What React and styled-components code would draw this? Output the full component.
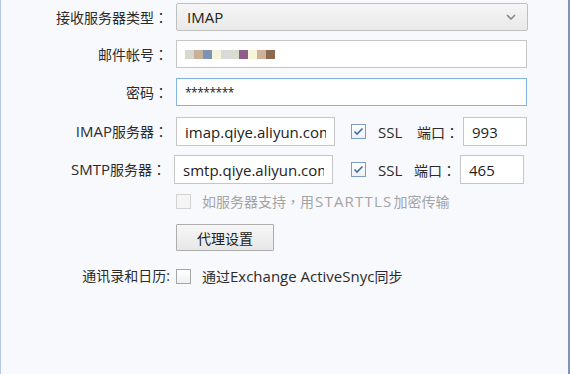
import React from "react";

// Styling
import styled, { createGlobalStyle } from "styled-components";

const mosaic = [
  "#d6d8cf",
  "#c9b09b",
  "#7d93b5",
  "#f4f4dc",
  "#d9d9d7",
  "#dbdcd0",
  "#8f5c8c",
  "#f6f5d8",
  "#cdb19a",
  "#8b6a52",
];

const servers = [
  { name: "IMAP", host: "imap.qiye.aliyun.com", port: "993", shift: 0 },
  { name: "SMTP", host: "smtp.qiye.aliyun.com", port: "465", shift: 2 },
];

const App = () => {
  return (
    <>
      <GlobalStyle />
      <StlWindow>
        <StlRow>
          <StlLabel>
            接收服务器类型<StlColon>：</StlColon>
          </StlLabel>
          <StlSelect>
            <StlLatin>IMAP</StlLatin>
            <svg width="10" height="6" viewBox="0 0 10 6">
              <polyline
                points="1,1 5,5 9,1"
                fill="none"
                stroke="#8a8a8a"
                strokeWidth="1.6"
              />
            </svg>
          </StlSelect>
        </StlRow>

        <StlRow $gap={9}>
          <StlLabel>
            邮件帐号<StlColon>：</StlColon>
          </StlLabel>
          <StlInput as="div">
            <StlMosaic>
              {mosaic.map((color, i) => (
                <StlTile key={i} style={{ background: color }} />
              ))}
            </StlMosaic>
          </StlInput>
        </StlRow>

        <StlRow $gap={10}>
          <StlLabel>
            密码<StlColon>：</StlColon>
          </StlLabel>
          <StlInput defaultValue="********" $focused $small />
        </StlRow>

        {servers.map((server, i) => (
          <StlRow $gap={i === 0 ? 11 : 9} key={server.name}>
            <StlLabel $shift={server.shift}>
              <StlLatin>{server.name}</StlLatin>服务器<StlColon>：</StlColon>
            </StlLabel>
            <StlInput $width={159} $tall defaultValue={server.host} />
            <StlCheck $checked $shift={server.shift}>
              <svg width="11" height="9" viewBox="0 0 11 9">
                <polyline
                  points="1.5,4.5 4,7 9.5,1.5"
                  fill="none"
                  stroke="#3d6fae"
                  strokeWidth="1.6"
                />
              </svg>
            </StlCheck>
            <StlSsl>SSL</StlSsl>
            <StlPortLabel $shift={server.shift}>
              端口<StlColon>：</StlColon>
            </StlPortLabel>
            <StlInput $width={64} $tall defaultValue={server.port} />
          </StlRow>
        ))}

        <StlRow $gap={9} $short>
          <StlLabel />
          <StlCheck $disabled />
          <StlOption $disabled>
            如服务器支持<StlColon>，</StlColon>用
            <StlLatin $wide>STARTTLS</StlLatin>加密传输
          </StlOption>
        </StlRow>

        <StlRow $gap={15}>
          <StlLabel />
          <StlButton>代理设置</StlButton>
        </StlRow>

        <StlRow $gap={17} $short>
          <StlLabel $plain>通讯录和日历:</StlLabel>
          <StlCheck />
          <StlOption>
            通过<StlLatin>Exchange ActiveSnyc</StlLatin>同步
          </StlOption>
        </StlRow>
      </StlWindow>
    </>
  );
};

const GlobalStyle = createGlobalStyle`
  body {
    margin: 0;
    font-family: "Open Sans", "Noto Sans CJK SC", sans-serif;
    font-size: 14px;
    color: #2b2b2b;
  }
`;

const StlWindow = styled.div`
  box-sizing: border-box;
  width: 570px;
  height: 374px;
  padding-top: 3px;
  background: #f7f9fd;
  border-left: 1px solid #b9c8de;
  border-right: 2px solid #8193b6;
`;

const StlRow = styled.div`
  display: flex;
  align-items: center;
  height: ${(p) => (p.$short ? "16px" : "auto")};
  margin-top: ${(p) => p.$gap || 0}px;
`;

const StlLabel = styled.label`
  width: ${(p) => (p.$plain ? 169 : 167 - (p.$shift || 0))}px;
  margin-right: ${(p) => (p.$plain ? "6px" : "8px")};
  text-align: right;
  white-space: nowrap;
  line-height: 20px;
`;

// Latin runs are drawn a size up, like the wide Latin of the Windows UI font
const StlLatin = styled.span`
  font-size: 15px;
  letter-spacing: ${(p) => (p.$wide ? "1.2px" : "0")};
  margin: ${(p) => (p.$wide ? "0 1px" : "0")};
`;

// Centred full-width punctuation
const StlColon = styled.span`
  font-family: "Noto Sans CJK TC", "Noto Sans CJK SC", sans-serif;
`;

const StlSelect = styled.div`
  box-sizing: border-box;
  width: 352px;
  height: 28px;
  display: flex;
  align-items: center;
  justify-content: space-between;
  padding: 0 11px 0 10px;
  border: 1px solid #bfbfbf;
  border-radius: 2px;
  background: linear-gradient(#f6f6f6, #e9e9e9);
  color: #222;
`;

const StlInput = styled.input`
  box-sizing: border-box;
  width: ${(p) => (p.$width ? p.$width + "px" : "351px")};
  height: ${(p) => (p.$tall ? "29px" : "28px")};
  display: flex;
  align-items: center;
  padding: 0 8px;
  border: 1px solid ${(p) => (p.$focused ? "#84b4e6" : "#c6c6c6")};
  background: #fff;
  font: inherit;
  font-size: ${(p) => (p.$small ? "12px" : "15px")};
  letter-spacing: ${(p) => (p.$small ? "-0.5px" : "0")};
  color: #222;
  outline: none;
`;

const StlMosaic = styled.div`
  display: flex;
  height: 9px;
`;

const StlTile = styled.span`
  width: 9px;
  height: 9px;
`;

const StlCheck = styled.span`
  box-sizing: border-box;
  flex: none;
  width: 15px;
  height: 15px;
  margin-left: ${(p) => (p.$checked ? 16 + (p.$shift || 0) : 0)}px;
  display: flex;
  align-items: center;
  justify-content: center;
  border: 1px solid
    ${(p) => (p.$checked ? "#7c9cc6" : p.$disabled ? "#d2d2d2" : "#a6a6a6")};
  background: ${(p) =>
    p.$disabled ? "#f5f5f5" : "linear-gradient(#ffffff, #eef0f3)"};
`;

const StlSsl = styled.span`
  margin-left: 12px;
  width: 26px;
  font-size: 15px;
`;

const StlPortLabel = styled.span`
  margin-left: ${(p) => 13 - (p.$shift || 0) * 1.5}px;
  margin-right: 4px;
  white-space: nowrap;
`;

const StlOption = styled.span`
  margin-left: 11px;
  white-space: nowrap;
  color: ${(p) => (p.$disabled ? "#a4a4a4" : "#2b2b2b")};
`;

const StlButton = styled.button`
  box-sizing: border-box;
  width: 98px;
  height: 27px;
  padding: 0;
  border: 1px solid #adadad;
  border-radius: 1px;
  background: linear-gradient(#f7f7f7, #e7e7e7);
  font: inherit;
  font-size: 14px;
  color: #222;
`;

export default App;
